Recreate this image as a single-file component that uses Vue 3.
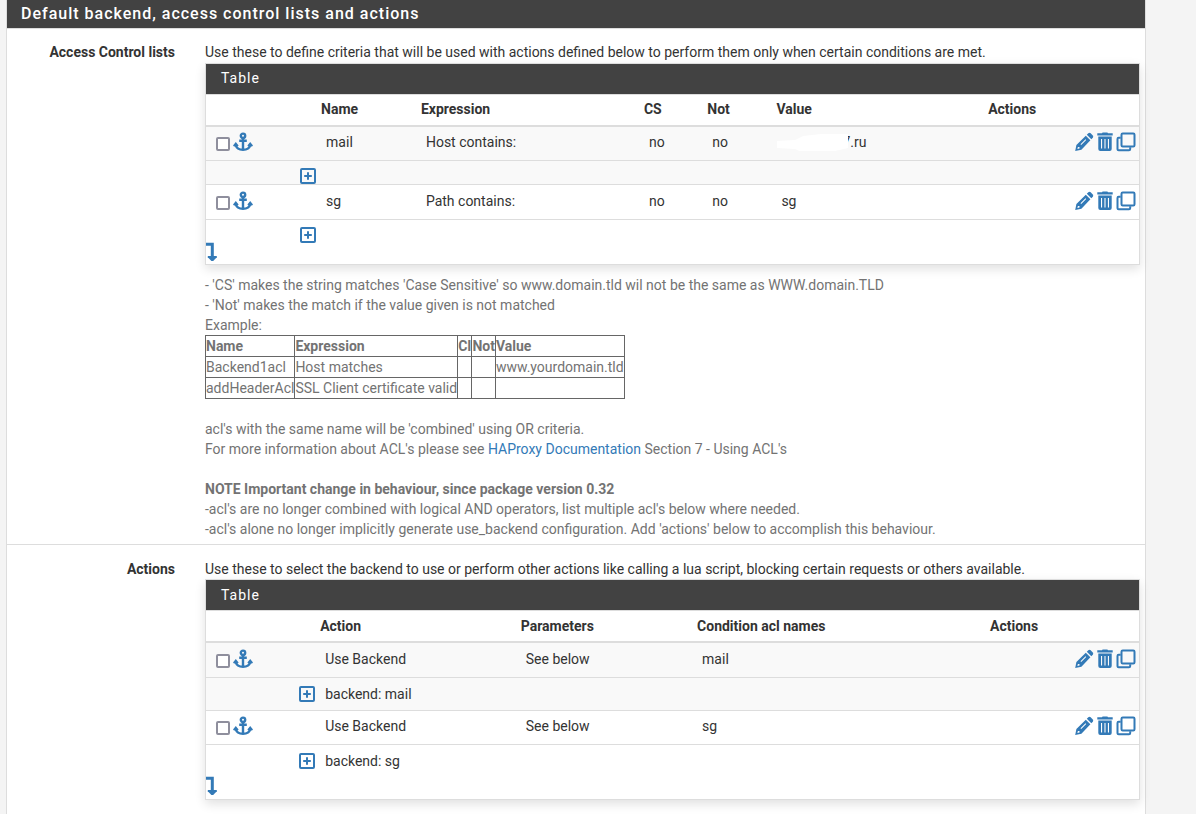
<script setup>
import { h } from 'vue'

const shapes = {
  anchor: () => [
    h('circle', { cx: 10, cy: 3.8, r: 2.2, class: 'line' }),
    h('path', { d: 'M10 6V18M6.200 8.800H13.800M2.600 13C3.600 16.400 6.300 17.800 10 17.800S16.400 16.400 17.400 13', class: 'line' }),
    h('path', { d: 'M0 13.400 2.800 9.900 5.600 13.400 4.700 14.600 1 14.600ZM20 13.400 17.200 9.900 14.400 13.400 15.300 14.600 19 14.600Z' }),
  ],
  pencil: () => [
    h('path', { 'fill-rule': 'evenodd', d: 'M11.800 3.700 16.400 8.300 7.400 17.700 1.200 19 2.400 13ZM3.900 14.900 3.400 17 5.500 16.500V14.900ZM11.500 7.200 6.500 12.200 7.200 12.900 12.200 7.900Z' }),
    h('path', { d: 'M12.800 2.800 14.300 1.300Q15.500.400 16.700 1.300L18.800 3.400Q19.700 4.600 18.800 5.800L17.300 7.300Z' }),
  ],
  trash: () => [
    h('path', { 'fill-rule': 'evenodd', d: 'M7 1.200 7.600.500H12.400L13 1.200H17.700V3.600H2.300V1.200H7ZM3.300 4.500H16.700V17Q16.700 19 14.700 19H5.300Q3.300 19 3.300 17ZM6 7V16.500H7.100V7ZM9.450 7V16.500H10.550V7ZM12.900 7V16.500H14V7Z' }),
  ],
  clone: () => [
    h('path', { d: 'M5.500 2.700Q5.500 1.500 6.700 1.500H17.300Q18.500 1.500 18.500 2.700V13.300Q18.500 14.500 17.300 14.500H6.700Q5.500 14.500 5.500 13.300Z', class: 'line' }),
    h('path', { d: 'M4.700 5.800H2.600Q1.500 5.800 1.500 7V17.200Q1.500 18.300 2.700 18.300H13Q14.200 18.300 14.200 17V15.300', class: 'line' }),
  ],
  plus: () => [
    h('rect', { x: 1, y: 1, width: 14, height: 14, rx: 1, class: 'line' }),
    h('path', { d: 'M8 4.200V11.800M4.200 8H11.800', class: 'line' }),
  ],
  turn: () => [
    h('path', { d: 'M0 1.300H6.300V14', class: 'line thick' }),
    h('path', { d: 'M1.800 13H10.800V14.300L7.200 18H5.400L1.800 14.300Z' }),
  ],
}
const boxes = { plus: '0 0 16 16', turn: '0 0 11 18' }
const Icon = ({ name }) =>
  h('svg', { viewBox: boxes[name] || '0 0 20 20', class: ['icon', name], 'aria-hidden': 'true' }, shapes[name]())
Icon.props = ['name']

const sections = [
  {
    id: 'acl',
    label: 'Access Control lists',
    intro: 'Use these to define criteria that will be used with actions defined below to perform them only when certain conditions are met.',
    columns: ['Name', 'Expression', 'CS', 'Not', 'Value'],
    rows: [
      { cells: ['mail', 'Host contains:', 'no', 'no', '7.ru'], masked: true, detail: '' },
      { cells: ['sg', 'Path contains:', 'no', 'no', 'sg'], detail: '' },
    ],
  },
  {
    id: 'act',
    label: 'Actions',
    intro: 'Use these to select the backend to use or perform other actions like calling a lua script, blocking certain requests or others available.',
    columns: ['Action', 'Parameters', 'Condition acl names'],
    rows: [
      { cells: ['Use Backend', 'See below', 'mail'], detail: 'backend: mail' },
      { cells: ['Use Backend', 'See below', 'sg'], detail: 'backend: sg' },
    ],
  },
]
</script>

<template>
  <main class="panel">
    <h2 class="panel-title">Default backend, access control lists and actions</h2>
    <section v-for="s in sections" :key="s.id" class="group" :class="s.id">
      <h3 class="label">{{ s.label }}</h3>
      <div class="content">
        <p class="intro">{{ s.intro }}</p>
        <div class="subpanel">
          <h4 class="sub-title">Table</h4>
          <table class="grid">
            <colgroup>
              <col class="c-tools">
              <col v-for="(c, i) in s.columns" :key="c" :class="'c-' + i">
              <col>
            </colgroup>
            <thead>
              <tr><th></th><th v-for="c in s.columns" :key="c">{{ c }}</th><th>Actions</th></tr>
            </thead>
            <tbody v-for="(r, n) in s.rows" :key="n">
              <tr class="item">
                <td class="tools">
                  <div class="tool-set">
                    <input type="checkbox" :aria-label="'Select ' + r.cells[0] + ' ' + (n + 1)">
                    <button type="button" aria-label="Move selected here"><Icon name="anchor" /></button>
                  </div>
                </td>
                <td v-for="(c, i) in r.cells" :key="i">
                  <span v-if="r.masked && i === 4" class="masked">{{ c }}<svg class="mask" viewBox="0 0 71 18" aria-hidden="true"><path d="M0 7 18 6 26 2 44 0 71 0V14L58 17H22L18 15 0 14Z" /></svg></span>
                  <template v-else>{{ c }}</template>
                </td>
                <td class="row-actions">
                  <div class="action-set">
                    <button type="button" aria-label="Edit"><Icon name="pencil" /></button>
                    <button type="button" aria-label="Delete"><Icon name="trash" /></button>
                    <button type="button" aria-label="Duplicate"><Icon name="clone" /></button>
                  </div>
                </td>
              </tr>
              <tr class="detail">
                <td class="expand"><button type="button" aria-label="Expand"><Icon name="plus" /></button></td>
                <td :colspan="s.columns.length + 1">{{ r.detail }}</td>
              </tr>
            </tbody>
          </table>
          <button class="add" type="button" aria-label="Add to end of list"><Icon name="turn" /></button>
        </div>
        <div v-if="s.id === 'acl'" class="help">
          - 'CS' makes the string matches 'Case Sensitive' so www.domain.tld wil not be the same as WWW.domain.TLD<br>
          - 'Not' makes the match if the value given is not matched<br>
          Example:
          <table class="example">
            <thead>
              <tr><th>Name</th><th>Expression</th><th>CI</th><th>Not</th><th>Value</th></tr>
            </thead>
            <tbody>
              <tr><td>Backend1acl</td><td>Host matches</td><td></td><td></td><td>www.yourdomain.tld</td></tr>
              <tr><td>addHeaderAcl</td><td>SSL Client certificate valid</td><td></td><td></td><td></td></tr>
            </tbody>
          </table>
          <br>
          acl's with the same name will be 'combined' using OR criteria.<br>
          For more information about ACL's please see <a href="#">HAProxy Documentation</a> Section 7 - Using ACL's<br>
          <br>
          <b>NOTE Important change in behaviour, since package version 0.32</b><br>
          -acl's are no longer combined with logical AND operators, list multiple acl's below where needed.<br>
          -acl's alone no longer implicitly generate use_backend configuration. Add 'actions' below to accomplish this behaviour.
        </div>
        <div v-else class="help">Example:</div>
      </div>
    </section>
  </main>
</template>

<style>
html, body { height: 100%; }
body { margin: 0; background: #f4f4f4; overflow: hidden; }
</style>

<style scoped>
.panel {
  margin: 0 50px 0 6px;
  border: 1px solid #ddd;
  border-top: 0;
  background: #fff;
  color: #333;
  font: 14px/20px Roboto, "Liberation Sans", sans-serif;
}
h2, h3, h4, p { margin: 0; font-size: inherit; }
.panel-title {
  padding: 4px 14px;
  background: #424242;
  color: #fff;
  font-size: 16px;
  font-weight: 500;
  letter-spacing: 1px;
  border-bottom: 1px solid #ddd;
}
.group { display: flex; gap: 30px; padding: 13px 5px 5px 0; }
.group + .group { padding-top: 14px; border-top: 1px solid #ddd; }
.label { flex: 0 0 168px; text-align: right; font-weight: 700; }
.content { flex: 1; min-width: 0; }
.acl .intro { padding-bottom: 1px; }
.subpanel {
  border: 1px solid #ddd;
  background: #fff;
  box-shadow: 0 4px 10px rgba(0, 0, 0, .12);
}
.sub-title {
  padding: 4px 15px 6px;
  background: #424242;
  color: #fff;
  font-weight: 400;
  letter-spacing: 1px;
}
.act .sub-title { padding: 5px 15px; }
.grid { width: 100%; table-layout: fixed; border-collapse: separate; border-spacing: 0; }
.c-tools { width: 11.8%; }
.acl .c-0 { width: 10.7%; }
.acl .c-1 { width: 23.9%; }
.acl .c-2 { width: 6.8%; }
.acl .c-3 { width: 7.4%; }
.acl .c-4 { width: 22.7%; }
.act .c-tools { width: 11.7%; }
.act .c-0 { width: 21.5%; }
.act .c-1 { width: 18.9%; }
.act .c-2 { width: 31.4%; }
.grid th { padding: 4px 5px 6px; height: 20px; text-align: left; font-weight: 700; border-top: 1px solid #ddd; border-bottom: 2px solid #ddd; }
.act .grid th { padding: 5px; }
.grid td { padding: 0 10px; vertical-align: middle; }
.grid .item td { height: 30px; padding-bottom: 3px; border-bottom: 1px solid #ddd; }
.acl tbody:nth-of-type(2) .item td, .act tbody:nth-of-type(1) .item td { height: 31px; }
.detail td { height: 23px; }
.act .detail td { height: 32px; }
.grid tbody:nth-of-type(odd) { background: #f9f9f9; }
.grid tbody:nth-of-type(odd) .detail td { border-bottom: 1px solid #ddd; }
button { display: block; padding: 0; border: 0; background: none; color: #337ab7; cursor: pointer; }
.tool-set, .action-set { display: flex; align-items: center; }
.tool-set { gap: 3px; }
.action-set { justify-content: flex-end; gap: 1px; }
.grid .item td.row-actions { padding: 0 3px 3px; }
input {
  appearance: none;
  box-sizing: border-box;
  width: 14px;
  height: 14px;
  margin: 4px 0 0;
  border: 2px solid #8f8f9d;
  border-radius: 2px;
  background: #fff;
}
.icon { display: block; width: 20px; height: 20px; fill: currentColor; overflow: visible; }
.icon :deep(.line) { fill: none; stroke: currentColor; stroke-width: 2; }
.icon.anchor :deep(.line) { stroke-width: 2.4; }
.plus { width: 16px; height: 16px; }
.turn { width: 11px; height: 18px; }
.icon :deep(.line.thick) { stroke-width: 3; }
.acl .grid td.expand { height: 16px; padding: 7px 0 0; }
.act .grid td.expand { padding: 0; }
.expand button { margin-left: auto; }
.add { padding-bottom: 3px; }
.act .add { padding-bottom: 4px; }
.masked { position: relative; padding-left: 61px; }
.mask { position: absolute; left: -4px; top: 0; width: 71px; height: 18px; fill: #fff; }
.help { margin-top: 10px; color: #737373; }
.example { border-collapse: collapse; border-spacing: 0; }
.example th, .example td { padding: 0; height: 20px; border: 1px solid #666; text-align: left; }
a { color: #337ab7; text-decoration: none; }
</style>
